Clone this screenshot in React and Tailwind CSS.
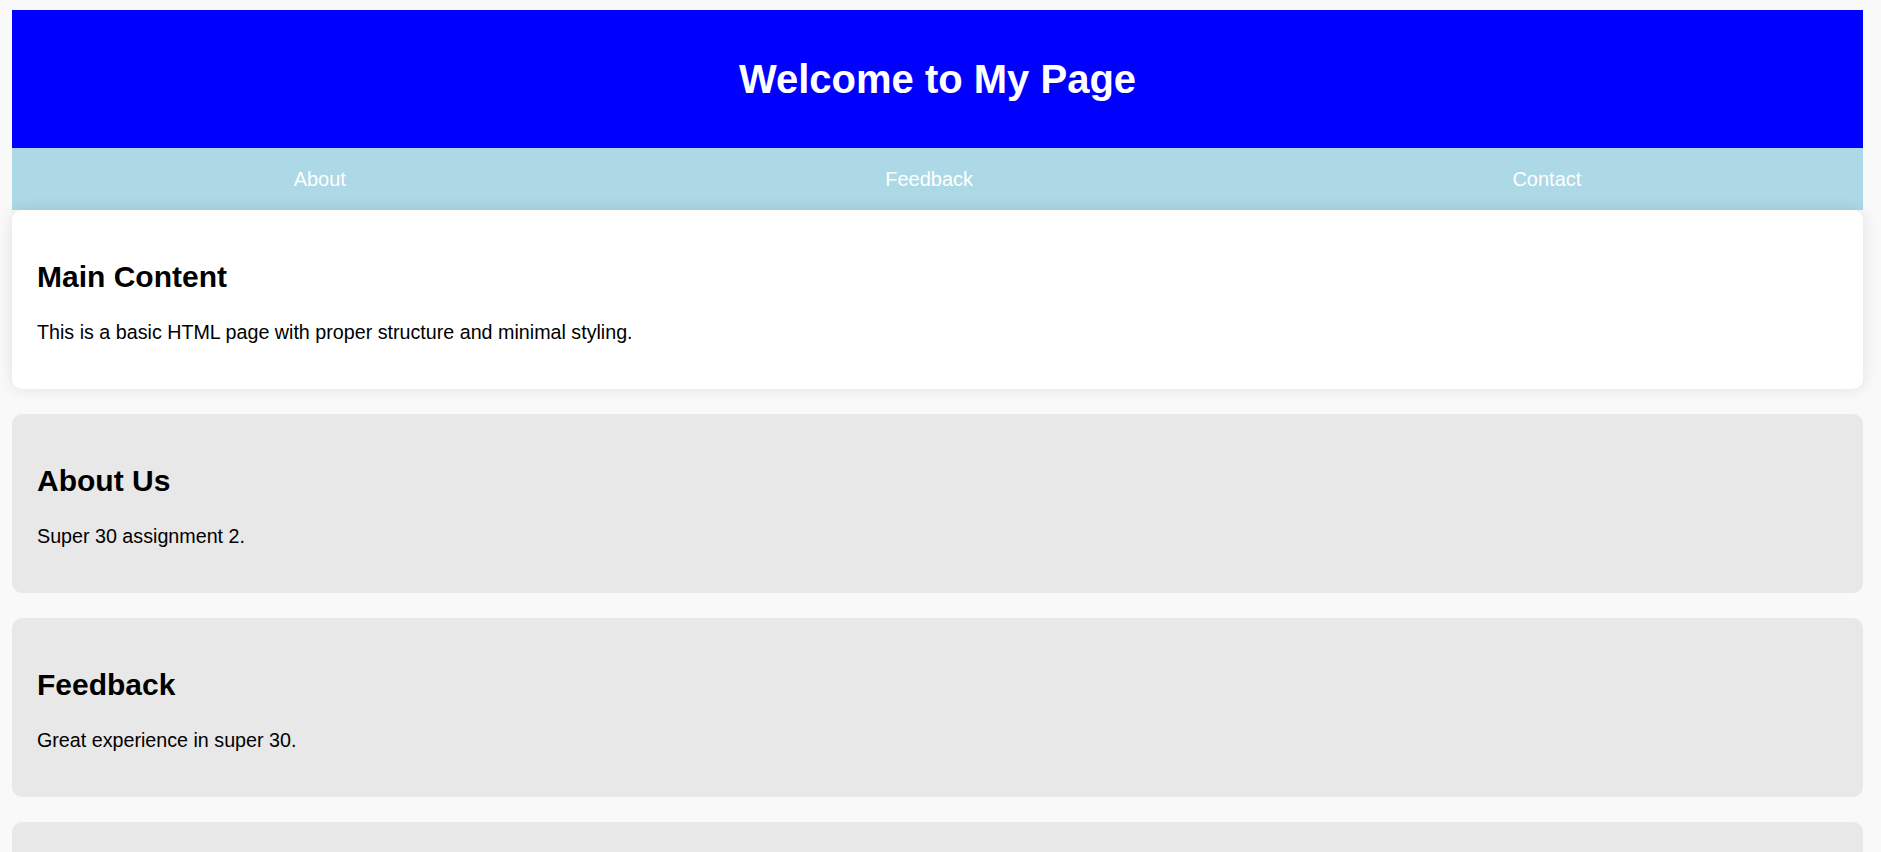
import React from 'react';

const navLinks = ['About', 'Feedback', 'Contact'];

const sections = [
  { key: 'about', title: 'About Us', text: 'Super 30 assignment 2.' },
  { key: 'feedback', title: 'Feedback', text: 'Great experience in super 30.' },
  { key: 'contact', title: 'Contact', text: 'Email us at contact@example.com.' },
];

function Card({ title, text, white = false }) {
  return (
    <section
      className={
        white
          ? 'rounded-[10px] bg-white p-[25px] shadow-[0_0_15px_rgba(0,0,0,0.1)] relative'
          : 'rounded-[10px] bg-[#e8e8e8] p-[25px]'
      }
    >
      <h2 className="mt-[24px] mb-[25px] text-[30px] leading-[36px] font-bold text-black">{title}</h2>
      <p className="mb-[19px] text-[19.7px] leading-[25px] text-black">{text}</p>
    </section>
  );
}

export default function App() {
  return (
    <div className="min-h-screen bg-[#f9f9f9] pt-[10px] pl-[12px] pr-[18px] pb-[25px] font-['Liberation_Sans',Arial,sans-serif]">
      {/* Header */}
      <header className="h-[138px] bg-[#0000ff] flex items-center justify-center">
        <h1 className="text-[40px] font-bold text-white leading-none">Welcome to My Page</h1>
      </header>

      {/* Nav */}
      <nav className="h-[62px] bg-[#add8e6] flex items-center px-[12px]">
        {navLinks.map((l) => (
          <a key={l} href={`#${l.toLowerCase()}`} className="grow text-center text-[20px] text-white">
            {l}
          </a>
        ))}
      </nav>

      <div className="flex flex-col gap-[25px]">
        <Card white title="Main Content" text="This is a basic HTML page with proper structure and minimal styling." />
        {sections.map((s) => (
          <Card key={s.key} title={s.title} text={s.text} />
        ))}
      </div>
    </div>
  );
}
